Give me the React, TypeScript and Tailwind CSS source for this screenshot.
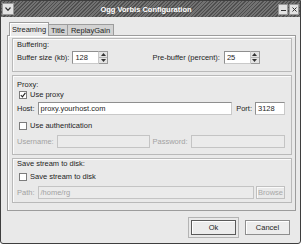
import React from "react";

function Frame({ label, className = "", children }: { label: string; className?: string; children?: React.ReactNode }) {
  return (
    <div className={`border border-[#b9b9b9] shadow-[inset_1px_1px_0_#fbfbfb] pl-[4px] pr-[6px] ${className}`}>
      <div className="h-[9px]">{label}</div>
      {children}
    </div>
  );
}

function Field({ value = "", disabled = false, className = "" }: { value?: string; disabled?: boolean; className?: string }) {
  return (
    <div
      className={`h-[13px] border pl-[2px] leading-[11px] whitespace-nowrap overflow-hidden ${
        disabled ? "border-[#c4c4c4] bg-[#ebebeb] text-[#a2a2a2]" : "border-[#8f8f8f] border-b-[#c9c9c9] border-r-[#c9c9c9] bg-white"
      } ${className}`}
    >
      {value}
    </div>
  );
}

function Spin({ value }: { value: string }) {
  return (
    <div className="flex h-[13px]">
      <Field value={value} className="w-[27px]" />
      <div className="flex w-[9px] flex-col border border-l-0 border-[#9a9a9a] bg-[#e4e4e4]">
        <div className="flex flex-1 items-center justify-center border-b border-[#b5b5b5]">
          <svg width="5" height="3" viewBox="0 0 5 3"><path d="M0 3 L2.5 0 L5 3 Z" fill="#333" /></svg>
        </div>
        <div className="flex flex-1 items-center justify-center">
          <svg width="5" height="3" viewBox="0 0 5 3"><path d="M0 0 L2.5 3 L5 0 Z" fill="#333" /></svg>
        </div>
      </div>
    </div>
  );
}

function Check({ label, checked = false }: { label: string; checked?: boolean }) {
  return (
    <div className="flex h-[9px] items-center pl-[2px]">
      <div className="flex h-[8px] w-[8px] items-center justify-center border border-[#7c7c7c] bg-white">
        {checked ? (
          <svg width="6" height="6" viewBox="0 0 6 6"><path d="M0.8 3 L2.4 4.8 L5.4 0.8" stroke="#222" strokeWidth="1.1" fill="none" /></svg>
        ) : null}
      </div>
      <span className="ml-[3px]">{label}</span>
    </div>
  );
}

function TitleBar() {
  return (
    <div className="relative flex h-[16px] items-center bg-[#5c5c5c] bg-[image:repeating-linear-gradient(135deg,#4e4e4e_0_1px,#727272_1px_2.5px)] px-[1px]">
      <div className="flex h-[12px] w-[12px] items-center justify-center border border-[#9a9a9a] bg-[#e2e2e2]">
        <svg width="6" height="4" viewBox="0 0 6 4"><path d="M0.5 0.5 L3 3.3 L5.5 0.5" stroke="#333" strokeWidth="1.2" fill="none" /></svg>
      </div>
      <div className="flex-1 text-center font-bold text-white">Ogg Vorbis Configuration</div>
      <div className="flex gap-[1px]">
        <div className="flex h-[11px] w-[10px] items-end justify-center border border-[#9a9a9a] bg-[#e2e2e2] pb-[3px]">
          <div className="h-[1px] w-[5px] bg-[#333]" />
        </div>
        <div className="flex h-[11px] w-[10px] items-center justify-center border border-[#9a9a9a] bg-[#e2e2e2]">
          <svg width="5" height="5" viewBox="0 0 5 5"><path d="M0.5 0.5 L4.5 4.5 M4.5 0.5 L0.5 4.5" stroke="#333" strokeWidth="1" /></svg>
        </div>
      </div>
    </div>
  );
}

export default function App() {
  return (
    <div className="h-[246px] w-[302px] bg-white font-['Liberation_Sans',Arial,sans-serif] text-[7.5px] leading-[9px] text-[#1e1e1e]">
      <div className="flex h-[244px] w-[301px] flex-col overflow-hidden rounded-b-[3px] border border-[#3e3e3e] bg-[#e9e9e9]">
        <TitleBar />
        <div className="pl-[6px] pr-[4px] pt-[5px]">
          <div className="flex items-end pl-[2px]">
            <div className="relative z-10 -mb-px flex h-[14px] w-[40px] items-center justify-center border border-b-0 border-[#9c9c9c] bg-[#e9e9e9] shadow-[inset_1px_1px_0_#fff]">
              Streaming
            </div>
            <div className="flex h-[11px] w-[19px] items-center justify-center border border-l-0 border-b-0 border-[#9c9c9c] bg-[#d2d2d2]">
              Title
            </div>
            <div className="flex h-[11px] w-[46px] items-center justify-center border border-l-0 border-b-0 border-[#9c9c9c] bg-[#d2d2d2]">
              ReplayGain
            </div>
          </div>
          <div className="flex h-[176px] flex-col gap-[3px] border border-[#9c9c9c] pl-[4px] pr-[3px] pt-[2px] shadow-[inset_1px_1px_0_#fff]">
            <Frame label="Buffering:" className="pt-[1px] pb-[7px]">
              <div className="mt-[2px] grid grid-cols-2 gap-[3px]">
                <div className="flex items-center">
                  <span className="mr-[3px]">Buffer size (kb):</span>
                  <Spin value="128" />
                </div>
                <div className="flex items-center">
                  <span className="mr-[4px]">Pre-buffer (percent):</span>
                  <Spin value="25" />
                </div>
              </div>
            </Frame>
            <Frame label="Proxy:" className="pt-[4px] pb-[6px]">
              <div className="mt-[1px]">
                <Check label="Use proxy" checked />
              </div>
              <div className="mt-[3px] flex items-center">
                <span className="mr-[3px]">Host:</span>
                <Field value="proxy.yourhost.com" className="flex-1" />
                <span className="ml-[4px] mr-[3px]">Port:</span>
                <Field value="3128" className="w-[30px]" />
              </div>
              <div className="mt-[6px]">
                <Check label="Use authentication" />
              </div>
              <div className="mt-[5px] grid grid-cols-2 gap-[3px]">
                <div className="flex items-center">
                  <span className="mr-[3px] text-[#a2a2a2]">Username:</span>
                  <Field disabled className="flex-1" />
                </div>
                <div className="flex items-center">
                  <span className="mr-[3px] text-[#a2a2a2]">Password:</span>
                  <Field disabled className="flex-1" />
                </div>
              </div>
            </Frame>
            <Frame label="Save stream to disk:" className="pt-0 pb-[3px]">
              <div className="mt-[4px]">
                <Check label="Save stream to disk" />
              </div>
              <div className="mt-[5px] flex items-center">
                <span className="mr-[3px] text-[#a2a2a2]">Path:</span>
                <Field value="/home/rg" disabled className="flex-1" />
                <div className="ml-[2px] flex h-[13px] w-[29px] items-center justify-center border border-[#c0c0c0] text-[#a8a8a8] shadow-[inset_1px_1px_0_#fafafa]">
                  Browse
                </div>
              </div>
            </Frame>
          </div>
        </div>
        <div className="mt-[6px] flex items-center justify-end gap-[6px] pr-[10px]">
          <div className="border border-[#b4b4b4] p-[2px]">
            <div className="flex h-[15px] w-[45px] items-center justify-center border border-[#5a5a5a] bg-[#ececec] shadow-[inset_1px_1px_0_#fff]">
              Ok
            </div>
          </div>
          <div className="flex h-[15px] w-[45px] items-center justify-center border border-[#8e8e8e] bg-[#ececec] shadow-[inset_1px_1px_0_#fff]">
            Cancel
          </div>
        </div>
      </div>
    </div>
  );
}
